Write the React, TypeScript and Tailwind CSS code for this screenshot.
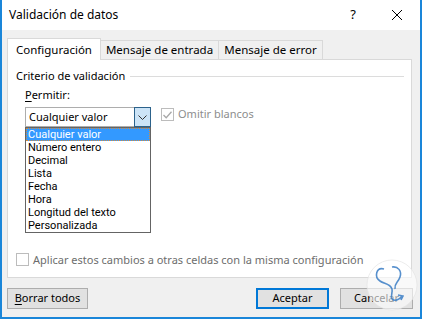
import React from 'react'

const items = [
  'Cualquier valor',
  'Número entero',
  'Decimal',
  'Lista',
  'Fecha',
  'Hora',
  'Longitud del texto',
  'Personalizada',
]

const App: React.FC = () => {
  return (
    <div className="relative w-[422px] h-[319px] flex flex-col bg-[#f0f0f0] border-x-2 border-b-2 border-[#1a86d9] font-['Noto_Sans',sans-serif] text-[11px] text-black overflow-hidden">
      {/* title bar */}
      <div className="h-[30px] bg-white flex items-center pl-[7px] shrink-0">
        <span className="text-[12px]">Validación de datos</span>
        <span className="ml-auto w-[14px] text-center text-[13px]">?</span>
        <svg className="ml-[31px] mr-[17px]" width="12" height="12" viewBox="0 0 12 12">
          <path d="M1 1 L11 11 M11 1 L1 11" stroke="#000" strokeWidth="1" />
        </svg>
      </div>

      {/* tabs */}
      <div className="flex items-end pl-[5px] pt-[8px] h-[29px] shrink-0">
        <div className="relative z-10 h-[22px] w-[94px] bg-white border border-b-0 border-[#d9d9d9] flex items-center justify-center -mb-px text-[11.5px]">
          Configuración
        </div>
        <div className="h-[19px] w-[118px] border border-l-0 border-b-0 border-[#d9d9d9] flex items-center justify-center text-[11.5px]">
          Mensaje de entrada
        </div>
        <div className="h-[19px] w-[104px] border border-l-0 border-b-0 border-[#d9d9d9] flex items-center justify-center text-[11.5px]">
          Mensaje de error
        </div>
      </div>

      {/* panel */}
      <div className="ml-[5px] mr-[8px] h-[219px] bg-white border border-[#d9d9d9] flex flex-col shrink-0">
        <div className="flex items-center pl-[8px] pr-[7px] pt-[8px] h-[25px]">
          <span>Criterio de validación</span>
          <div className="flex-1 h-px bg-[#dcdcdc] ml-[5px]" />
        </div>
        <div className="pl-[17px] mt-[2px] h-[16px] leading-[16px]">
          <span className="underline underline-offset-2">P</span>ermitir:
        </div>
        <div className="flex items-start pl-[17px] mt-[4px]">
          <div className="relative w-[126px]">
            <div className="h-[20px] border border-[#adadad] flex items-center pl-[3px]">
              <span>Cualquier valor</span>
              <div className="ml-auto -mr-px -my-px h-[20px] w-[17px] border border-[#2c628b] bg-[#cce4f7] flex items-center justify-center">
                <svg width="9" height="5" viewBox="0 0 9 5">
                  <path d="M0.5 0.5 L4.5 4.5 L8.5 0.5" stroke="#333" fill="none" strokeWidth="1" />
                </svg>
              </div>
            </div>
            <div className="absolute left-0 top-[20px] w-[126px] h-[106px] z-20 bg-white border border-[#646464] font-['Roboto',sans-serif] text-[11px] leading-[13px]">
              {items.map((it, i) => (
                <div
                  key={it}
                  className={
                    i === 0
                      ? 'h-[13px] pl-[2px] bg-[#3399ff] text-white outline-1 outline-dotted outline-[#d48a3a] -outline-offset-1'
                      : 'h-[13px] pl-[2px]'
                  }
                >
                  {it}
                </div>
              ))}
            </div>
          </div>
          <div className="flex items-center ml-[10px] mt-px h-[13px]">
            <div className="w-[13px] h-[13px] border border-[#bcbcbc] flex items-center justify-center">
              <svg width="9" height="8" viewBox="0 0 9 8">
                <path d="M0.5 4 L3.2 6.8 L8.5 0.8" stroke="#a8a8a8" fill="none" strokeWidth="1.3" />
              </svg>
            </div>
            <span className="ml-[4px] text-[#8d8d8d]">Omitir blancos</span>
          </div>
        </div>
        <div className="flex-1" />
        <div className="flex items-center pl-[8px] mb-[9px]">
          <div className="w-[13px] h-[13px] border border-[#bcbcbc]" />
          <span className="ml-[4px] text-[#6d6d6d]">Aplicar estos cambios a otras celdas con la misma configuración</span>
        </div>
      </div>

      {/* buttons */}
      <div className="flex items-center pl-[5px] pr-[7px] mt-[10px]">
        <button className="h-[21px] w-[81px] bg-[#e1e1e1] border border-[#adadad] flex items-center justify-center">
          <span><span className="underline underline-offset-2">B</span>orrar todos</span>
        </button>
        <button className="ml-auto h-[21px] w-[73px] bg-[#e1e1e1] border-2 border-[#0078d7] flex items-center justify-center">
          Aceptar
        </button>
        <button className="ml-[11px] h-[21px] w-[73px] bg-[#e1e1e1] border border-[#adadad] flex items-center justify-center">
          Cancelar
        </button>
      </div>

      {/* watermark */}
      <svg className="absolute left-[360px] top-[259px] z-30" width="60" height="52" viewBox="0 0 60 52">
        <circle cx="30" cy="26" r="25" fill="#ffffff" fillOpacity="0.6" stroke="#e4e4e4" strokeOpacity="0.7" />
        <path
          d="M22 10 C14 8 12 18 18 22 C22 25 28 24 30 30 C31 34 28 38 30 40 C33 43 38 40 40 37 M36 36 L41 37 L39 41 M30 8 C36 7 40 12 38 18 C36 24 32 24 33 30"
          stroke="#3a7cc4"
          strokeWidth="1.6"
          fill="none"
          strokeOpacity="0.85"
        />
      </svg>
    </div>
  )
}

export default App
